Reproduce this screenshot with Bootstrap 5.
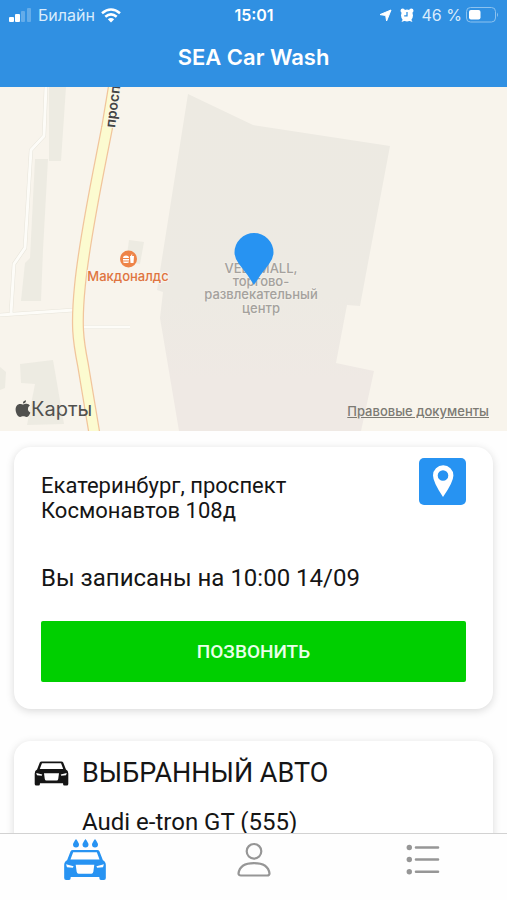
<!DOCTYPE html>
<html lang="ru">
<head>
<meta charset="utf-8">
<meta name="viewport" content="width=device-width, initial-scale=1">
<title>SEA Car Wash</title>
<link href="https://cdn.jsdelivr.net/npm/bootstrap@5.3.0/dist/css/bootstrap.min.css" rel="stylesheet">
<style>
  body { font-family: Roboto, "Liberation Sans", sans-serif; color: #151515; background: #fefefe; }
  svg { display: block; }
  .ui-font { font-family: Inter, "Open Sans", sans-serif; }
  .app-header { background: #3090e2; color: #fff; }
  .status-bar { font-size: 16px; line-height: 20px; padding: 5px 8px 0 9px; }
  .status-side { flex: 1 1 0; }
  .status-left { gap: 6px; }
  .status-soft { color: #d9ecfc; }
  .app-title { font-size: 22px; line-height: 28px; padding: 18px 0 16px; font-weight: 600; }
  .app-scroll { min-height: 0; scrollbar-width: none; }
  .map-box { background: #f8f4ec; }
  .map-art { width: 100%; height: 344px; }
  .maps-brand { left: 15px; bottom: 10px; color: #50504e; font-size: 20px; line-height: 24px; }
  .legal-link { right: 18px; bottom: 12px; color: #7c7a73; font-size: 13px; line-height: 16px; font-weight: 500; }
  .panel { border: 0; border-radius: 17px; box-shadow: 0 2px 9px rgba(0, 0, 0, .15); background: #fff; }
  .panels { padding: 16px 14px; gap: 32px; }
  .visit-panel { padding: 11px 27px 27px; }
  .address { font-size: 22px; line-height: 25px; padding-top: 15px; max-width: 300px; }
  .btn-route { width: 47px; height: 47px; background: #2793f2; border-radius: 5px; }
  .booking { font-size: 24px; line-height: 30px; margin: 40px 0 28px; }
  .btn-call, .btn-call:hover { background: #00cf00; color: #e9ffe9; font-size: 19px; line-height: 25px; padding: 18px; border: 0; border-radius: 2px; font-weight: 500; }
  .car-panel { padding: 16px 20px 27px; column-gap: 13px; }
  .car-heading { font-size: 27px; line-height: 32px; font-weight: 400; margin: 0 0 18px; }
  .car-name { font-size: 24px; line-height: 30px; }
  .tab-bar { border-top: 1px solid #d2d2d2; background: #fefefe; }
  .tab-bar a { height: 66px; padding-top: 5px; color: #969696; }
  .tab-bar a.active { color: #2793f2; }
</style>
<script src="https://cdn.jsdelivr.net/npm/bootstrap@5.3.0/dist/js/bootstrap.bundle.min.js"></script>
</head>
<body>
<svg width="0" height="0" class="position-absolute" aria-hidden="true">
  <symbol id="car" viewBox="0 0 44 32">
    <path fill="currentColor" fill-rule="evenodd" d="M9.500 0.500H34.500Q36.300 0.500 37 2L40.500 11Q43.500 12.500 43.500 16V29.500Q43.500 31.500 41.500 31.500H38.500Q36.800 31.500 36.800 29.500V28.500H7.200V29.500Q7.200 31.500 5.500 31.500H2.500Q0.500 31.500 0.500 29.500V16Q0.500 12.500 3.500 11L7 2Q7.700 0.500 9.500 0.500ZM9.800 2.800L7 10.200H37L34.200 2.800ZM2.500 15.300L3.400 18.200 9.500 18.900 10.200 17.300ZM41.500 15.300L40.600 18.200 34.500 18.900 33.800 17.300ZM12.400 15.800L13.400 23Q13.800 25 15.400 25H28.600Q30.200 25 30.600 23L31.600 15.800Z"/>
  </symbol>
</svg>
<div class="d-flex flex-column vh-100">
  <header class="app-header ui-font">
    <div class="status-bar d-flex align-items-center">
      <div class="status-side status-left status-soft d-flex align-items-center">
        <svg width="23" height="14" viewBox="0 0 23 14" aria-hidden="true"><g fill="#fff"><rect x="0" y="9" width="5" height="5" rx="1"/><rect x="6" y="6" width="5" height="8" rx="1"/><g opacity=".25"><rect x="12" y="3" width="4" height="11" rx="1"/><rect x="18" y="0" width="4" height="14" rx="1"/></g></g></svg>
        <span>Билайн</span>
        <svg width="20" height="15" viewBox="0 0 20 15" fill="none" stroke="#fff" stroke-width="2.600" aria-hidden="true"><path d="M1 5.200Q10-2.200 19 5.200M4.300 8.700Q10 4 15.700 8.700"/><path d="M10 14.500L6.800 11.300Q10 8.600 13.200 11.300Z" fill="#fff" stroke="none"/></svg>
      </div>
      <span class="fw-semibold">15:01</span>
      <div class="status-side status-soft d-flex align-items-center justify-content-end gap-1">
        <svg class="me-1" width="13" height="13" viewBox="0 0 13 13" aria-hidden="true"><path fill="#fff" stroke="#fff" stroke-linejoin="round" d="M12 1L7.600 12 6.700 6.500 1 5.600Z"/></svg>
        <svg class="me-1" width="14" height="14" viewBox="0 0 14 14" aria-hidden="true"><g fill="#fff"><circle cx="7" cy="7.500" r="6"/><circle cx="2.700" cy="2.700" r="2.200"/><circle cx="11.300" cy="2.700" r="2.200"/><path d="M1.500 14l1.500-3 2.500 1.500zM12.500 14l-1.500-3-2.500 1.500z"/></g><path d="M7 4V7.900H4.200" fill="none" stroke="#3090e2" stroke-width="1.300"/></svg>
        <span>46 %</span>
        <svg width="33" height="16" viewBox="0 0 33 16" aria-hidden="true"><rect x=".5" y=".5" width="29" height="14.500" rx="4" fill="none" stroke="#8cc2ef"/><rect x="3" y="3" width="11.500" height="9.500" rx="2" fill="#fff"/><path d="M31 5.500Q33 7.800 31 10Z" fill="#8cc2ef"/></svg>
      </div>
    </div>
    <h1 class="app-title text-center m-0">SEA Car Wash</h1>
  </header>

  <main class="app-scroll flex-fill overflow-auto">
    <section class="map-box position-relative" aria-label="Карта">
      <svg class="map-art" viewBox="0 87 507 344" preserveAspectRatio="xMidYMid slice">
        <defs>
          <linearGradient id="mallFill" x1="0" y1="0" x2="0" y2="1"><stop offset="0" stop-color="#edeae2"/><stop offset=".6" stop-color="#edeae3"/><stop offset=".85" stop-color="#efe9e4"/></linearGradient>
        </defs>
        <rect y="87" width="507" height="344" fill="#f8f4ec"/>
        <g fill="#edebe2">
          <path d="M49 87H66L61 161H49ZM35 159H48L43 250 41 301H21L25 263 30 258ZM129 240L144 242 140 264 126 262ZM20 364L53 360 64 424 27 425 35 384 21 383ZM0 367L6 372 5 388 0 390Z"/>
        </g>
        <path fill="url(#mallFill)" d="M188 94L253 125 390 146 368 263 360 306 347 305 336 363 374 371 361 431H179L160 318 163 292 157 290Z"/>
        <path fill="none" stroke="#e7e4da" stroke-width="4" stroke-linejoin="round" d="M46 87L44 136 31 150 25 248 14 264 11 313M0 315L74 310M83 327H130"/>
        <path fill="none" stroke="#fdfcf8" stroke-width="3" stroke-linejoin="round" d="M46 87L44 136 31 150 25 248 14 264 11 313M0 315L74 310M83 327H130"/>
        <g fill="none"><path stroke="#f1c59c" stroke-width="12" d="M115 80L107 128C98 175 85 235 80 285C76 325 78 340 83 365L95 437"/><path stroke="#fcfbd0" stroke-width="9.500" d="M115 80L107 128C98 175 85 235 80 285C76 325 78 340 83 365L95 437"/></g>
        <text transform="translate(115 128) rotate(-83)" class="ui-font" font-size="14" font-weight="600" fill="#444" stroke="#f8f4ec" stroke-width="2" paint-order="stroke">просп</text>
        <circle cx="128.500" cy="259" r="8.500" fill="#ee8448"/>
        <path fill="#fff" d="M123 258Q123 255.500 126 255.500T129 258ZM123 259H129V260.500H123ZM123 261.500H129Q129 263 127 263H125Q123 263 123 261.500ZM130 256H131L131.500 254.500H132.500L132 256H134L133.500 263H130.500Z"/>
        <g class="ui-font" text-anchor="middle" font-weight="500" paint-order="stroke" stroke="#f8f4ec" stroke-width="2">
          <text x="128" y="281" font-size="13" fill="#df7440">Макдоналдс</text>
          <g font-size="13" fill="#a4a19d" stroke="#f1eee7">
            <text x="261" y="273">VEERMALL,</text><text x="261" y="286">торгово-</text><text x="261" y="299">развлекательный</text><text x="261" y="313">центр</text>
          </g>
        </g>
        <path fill="#2793f2" d="M254 285Q248 275 239 264Q234.500 258 234.500 252.500A19.500 19.500 0 0 1 273.500 252.500Q273.500 258 269 264Q260 275 254 285Z"/>
      </svg>
      <div class="maps-brand ui-font position-absolute d-flex align-items-center">
        <svg width="16" height="18" viewBox="0 0 16 18" aria-hidden="true"><path fill="currentColor" d="M8.200 4.500C9.300 4.500 10.200 3.800 11.700 3.800Q13.800 3.900 14.900 5.600Q12.800 7 12.900 9.200Q13 11.800 15.400 12.800Q13.700 17 11.500 17C10.200 17 9.700 16.300 8.300 16.300C6.900 16.300 6.300 17 5.100 17C2.700 17 .6 12.900 .6 9.600C.6 6 2.700 3.900 5 3.900C6.400 3.900 7.400 4.500 8.200 4.500ZM7.900 3.600Q7.900 .7 11 .2Q11.200 3.200 7.900 3.600Z"/></svg>
        <span>Карты</span>
      </div>
      <a href="#" class="legal-link ui-font position-absolute">Правовые документы</a>
    </section>

    <div class="panels d-flex flex-column">
      <section class="card panel visit-panel">
        <div class="d-flex justify-content-between align-items-start">
          <address class="address m-0">Екатеринбург, проспект Космонавтов 108д</address>
          <button type="button" class="btn btn-route border-0 p-0 flex-shrink-0" aria-label="Показать маршрут">
            <svg width="47" height="47" viewBox="0 0 47 47"><path fill="#fff" fill-rule="evenodd" d="M24 39Q14 24 14 17.500A10.200 10.200 0 0 1 34.400 17.500Q34.400 24 24 39ZM24 12.200A5.300 5.300 0 1 0 24 22.800A5.300 5.300 0 1 0 24 12.200Z"/></svg>
          </button>
        </div>
        <p class="booking">Вы записаны на 10:00 14/09</p>
        <button type="button" class="btn btn-call w-100">ПОЗВОНИТЬ</button>
      </section>

      <section class="card panel car-panel flex-row align-items-start">
        <svg class="mt-1 flex-shrink-0" width="35" height="25"><use href="#car"/></svg>
        <div>
          <h2 class="car-heading">ВЫБРАННЫЙ АВТО</h2>
          <div class="car-name">Audi e-tron GT (555)</div>
        </div>
      </section>
    </div>
  </main>

  <nav class="tab-bar nav nav-justified flex-nowrap" aria-label="Разделы">
    <a href="#" class="nav-item active d-flex justify-content-center" aria-current="page" aria-label="Мойка">
      <svg width="44" height="42" viewBox="0 0 44 42"><path fill="currentColor" d="M13 0Q16 4 16 5.500A3 3 0 0 1 10 5.500Q10 4 13 0ZM22.500 0Q25.500 4 25.500 5.500A3 3 0 0 1 19.500 5.500Q19.500 4 22.500 0ZM32 0Q35 4 35 5.500A3 3 0 0 1 29 5.500Q29 4 32 0Z"/><use href="#car" y="10.500" width="44" height="31"/></svg>
    </a>
    <a href="#" class="nav-item d-flex justify-content-center" aria-label="Профиль">
      <svg width="34" height="42" viewBox="0 0 34 42" fill="none" stroke="currentColor" stroke-width="2.200"><circle cx="17" cy="12.300" r="7.300"/><path d="M4 36.500Q1.500 36.500 1.500 34.500C2.500 27 9 24.200 17 24.200S31.500 27 32.500 34.500Q32.500 36.500 30 36.500Z"/></svg>
    </a>
    <a href="#" class="nav-item d-flex justify-content-center" aria-label="Список">
      <svg width="34" height="42" viewBox="0 0 34 42"><g fill="currentColor"><circle cx="3.300" cy="8.500" r="2.700"/><circle cx="3.300" cy="20.500" r="2.700"/><circle cx="3.300" cy="32.700" r="2.700"/></g><path d="M10 8.500H32M10 20.500H32M10 32.700H32" stroke="currentColor" stroke-width="2.600" stroke-linecap="round"/></svg>
    </a>
  </nav>
</div>
</body>
</html>
